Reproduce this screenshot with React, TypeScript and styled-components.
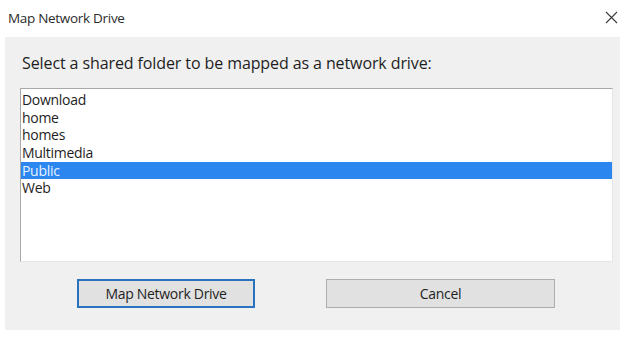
import React, { useState } from "react";
import styled, { createGlobalStyle } from "styled-components";

const GlobalStyle = createGlobalStyle`
  html, body {
    margin: 0;
    padding: 0;
    background: #ffffff;
  }
  body {
    font-family: "Open Sans", "Noto Sans", "Liberation Sans", sans-serif;
  }
`;

const Dialog = styled.div`
  width: 632px;
  height: 339px;
  background: #ffffff;
  display: flex;
  flex-direction: column;
  box-sizing: border-box;
`;

const TitleBar = styled.div`
  height: 37px;
  display: flex;
  align-items: center;
  justify-content: space-between;
  padding: 0 14px 2px 8px;
  box-sizing: border-box;
`;

const Title = styled.span`
  font-size: 13.5px;
  color: #2b2b2b;
  letter-spacing: -0.3px;
`;

const CloseButton = styled.button`
  border: none;
  background: transparent;
  padding: 0;
  width: 14px;
  height: 14px;
  display: flex;
  align-items: center;
  justify-content: center;
  cursor: pointer;
`;

const Panel = styled.div`
  margin: 0 12px 9px 5px;
  flex: 1;
  background: #f0f0f0;
  display: flex;
  flex-direction: column;
  padding: 13px 7px 0 15px;
  box-sizing: border-box;
`;

const Prompt = styled.div`
  font-size: 16px;
  color: #1e1e1e;
  padding-left: 2px;
  height: 26px;
  line-height: 26px;
  letter-spacing: -0.1px;
`;

const ListBox = styled.ul`
  list-style: none;
  margin: 12px 0 0 0;
  padding: 2px 0 0 0;
  height: 174px;
  background: #ffffff;
  border-top: 1px solid #a9a9a9;
  border-left: 1px solid #a9a9a9;
  border-right: 1px solid #e6e6e6;
  border-bottom: 1px solid #e6e6e6;
  box-sizing: border-box;
  overflow: hidden;
`;

const ListItem = styled.li<{ $selected?: boolean }>`
  height: 17.7px;
  line-height: 17.7px;
  padding-left: 1px;
  font-size: 14px;
  letter-spacing: -0.3px;
  color: ${(p) => (p.$selected ? "#e8f3ff" : "#1e1e1e")};
  background: ${(p) => (p.$selected ? "#2b86f0" : "transparent")};
  cursor: default;
`;

const ButtonRow = styled.div`
  display: flex;
  gap: 71px;
  padding-left: 57px;
  margin-top: 17px;
`;

const DialogButton = styled.button<{ $primary?: boolean; $width: number }>`
  width: ${(p) => p.$width}px;
  height: 29px;
  background: #e1e1e1;
  border: ${(p) => (p.$primary ? "2px solid #2a72bd" : "1px solid #adadad")};
  font-family: "Open Sans", "Noto Sans", "Liberation Sans", sans-serif;
  font-size: 14px;
  letter-spacing: -0.3px;
  color: #1e1e1e;
  padding: 0;
  box-sizing: border-box;
  cursor: pointer;
`;

const folders = ["Download", "home", "homes", "Multimedia", "Public", "Web"];

const App = () => {
  const [selected, setSelected] = useState("Public");

  return (
    <>
      <GlobalStyle />
      <Dialog>
        <TitleBar>
          <Title>Map Network Drive</Title>
          <CloseButton aria-label="Close">
            <svg width="13" height="13" viewBox="0 0 13 13">
              <path d="M1 1 L12 12 M12 1 L1 12" stroke="#3a3a3a" strokeWidth="1.1" />
            </svg>
          </CloseButton>
        </TitleBar>
        <Panel>
          <Prompt>Select a shared folder to be mapped as a network drive:</Prompt>
          <ListBox>
            {folders.map((f) => (
              <ListItem key={f} $selected={f === selected} onClick={() => setSelected(f)}>
                {f}
              </ListItem>
            ))}
          </ListBox>
          <ButtonRow>
            <DialogButton $primary $width={178}>
              Map Network Drive
            </DialogButton>
            <DialogButton $width={229}>Cancel</DialogButton>
          </ButtonRow>
        </Panel>
      </Dialog>
    </>
  );
};

export default App;
